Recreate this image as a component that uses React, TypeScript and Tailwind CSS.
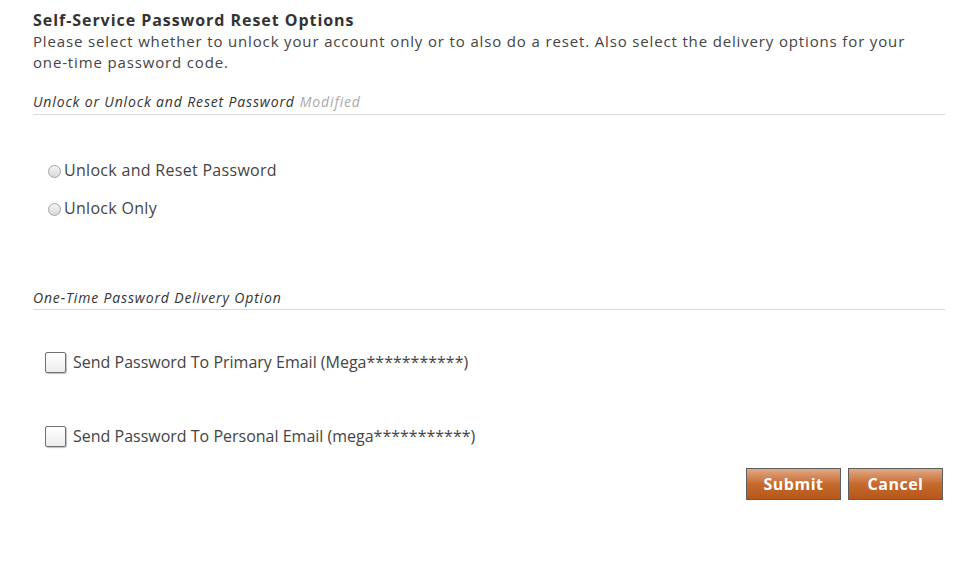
import React from "react";

export default function App() {
  const font = { fontFamily: '"Open Sans", "Noto Sans", sans-serif' };
  return (
    <div className="w-[960px] h-[569px] bg-white text-[#444]" style={font}>
      <div className="pl-[33px] pr-[15px] pt-[10px]">
        <h1 className="text-[16px] font-bold leading-[21px] text-[#333] tracking-[0.95px]">Self-Service Password Reset Options</h1>
        <p className="text-[15px] leading-[21px] text-[#444] tracking-[0.85px]">
          Please select whether to unlock your account only or to also do a reset. Also select the delivery options for your <span className="whitespace-nowrap">one-time</span> password code.
        </p>
        <div className="mt-[16px] border-b border-[#dcdcdc] pb-[1px] tracking-[0.85px]">
          <span className="text-[14px] italic text-[#333] leading-[18px]">Unlock or Unlock and Reset Password</span>{" "}
          <span className="text-[14px] italic text-[#aaa] leading-[18px]">Modified</span>
        </div>
        <div className="pl-[15px] pt-[44px] flex flex-col gap-[16px]">
          <label className="flex items-center gap-[3px] text-[16px] leading-[22px] text-[#444] tracking-[0.3px]">
            <span className="w-[13px] h-[13px] rounded-full border border-[#a5a5a5] bg-gradient-to-b from-[#f5f5f5] to-[#d8d8d8] mt-[3px]" />
            Unlock and Reset Password
          </label>
          <label className="flex items-center gap-[3px] text-[16px] leading-[22px] text-[#444] tracking-[0.3px]">
            <span className="w-[13px] h-[13px] rounded-full border border-[#a5a5a5] bg-gradient-to-b from-[#f5f5f5] to-[#d8d8d8] mt-[3px]" />
            Unlock Only
          </label>
        </div>
        <div className="mt-[66px] border-b border-[#dcdcdc] pb-0 tracking-[0.85px]">
          <span className="text-[14px] italic text-[#333] leading-[18px]">One-Time Password Delivery Option</span>
        </div>
        <div className="pl-[12px] pt-[41px] flex flex-col gap-[52px]">
          <label className="flex items-center gap-[7px] text-[16px] leading-[22px] text-[#444]">
            <span className="w-[21px] h-[21px] border border-[#707070] bg-gradient-to-b from-white to-[#ececec] rounded-[2px] shadow-[1px_1px_1px_rgba(0,0,0,0.25)]" />
            Send Password To Primary Email (Mega***********)
          </label>
          <label className="flex items-center gap-[7px] text-[16px] leading-[22px] text-[#444]">
            <span className="w-[21px] h-[21px] border border-[#707070] bg-gradient-to-b from-white to-[#ececec] rounded-[2px] shadow-[1px_1px_1px_rgba(0,0,0,0.25)]" />
            Send Password To Personal Email (mega***********)
          </label>
        </div>
        <div className="flex justify-end gap-[7px] mt-[21px] pr-[2px]">
          <button className="w-[95px] h-[32px] border border-[#5e5e5e] bg-gradient-to-b from-[#e0a983] via-[#c66a2e] to-[#b65618] text-white font-bold text-[16px] tracking-[0.5px]">Submit</button>
          <button className="w-[95px] h-[32px] border border-[#5e5e5e] bg-gradient-to-b from-[#e0a983] via-[#c66a2e] to-[#b65618] text-white font-bold text-[16px] tracking-[0.5px]">Cancel</button>
        </div>
      </div>
    </div>
  );
}
